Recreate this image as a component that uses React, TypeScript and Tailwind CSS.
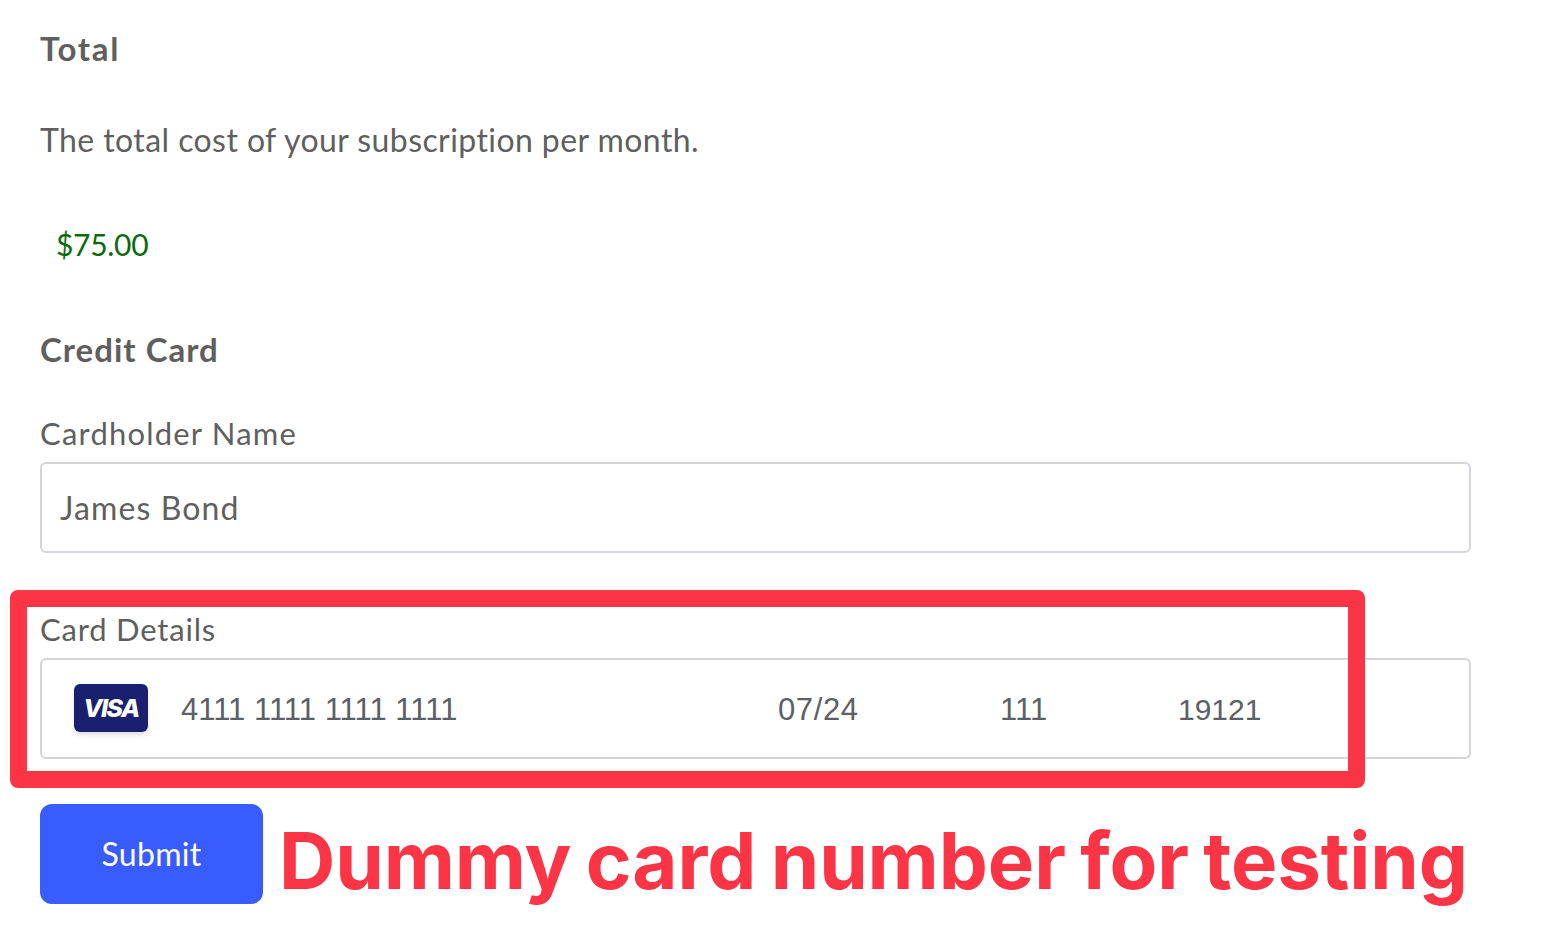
export default function App() {
  return (
    <main className="relative h-[941px] w-[1550px] overflow-hidden bg-white pl-10 text-[#5f5f5f] font-['Lato',sans-serif]">
      <h2 className="pt-[28px] text-[33px] leading-10 font-bold tracking-[1.7px]">Total</h2>
      <p className="mt-[52px] text-[32px] leading-10 tracking-[0.42px]">The total cost of your subscription per month.</p>
      <p className="mt-[64px] pl-4 text-[30px] leading-10 tracking-[-0.3px] text-[#0b6b0b]">$75.00</p>
      <h2 className="mt-[65px] text-[33px] leading-10 font-bold tracking-[1px]">Credit Card</h2>

      <label className="mt-[44px] block text-[31px] leading-10 tracking-[1.2px]">Cardholder Name</label>
      <div className="mt-[9px] flex h-[91px] w-[1431px] items-center rounded-md border-2 border-[#d3d5db] px-[18px] text-[32px] tracking-[1.1px]">
        James Bond
      </div>

      <label className="mt-[56px] block text-[31px] leading-10 tracking-[0.8px]">Card Details</label>
      <div className="mt-[9px] flex h-[101px] w-[1431px] items-center rounded-md border-2 border-[#d3d5db] pl-8 text-[31px] text-[#5c5f66] font-['Liberation_Sans',sans-serif]">
        <div className="mb-[2px] flex h-[48px] w-[74px] items-center justify-center rounded-md bg-[#18206f] pt-[2px] shadow-md">
          <span className="text-[25px] leading-none font-extrabold italic tracking-[-1.5px] text-white font-['Inter',sans-serif]">VISA</span>
        </div>
        <span className="ml-[33px] mt-[4px] w-[597px]">4111 1111 1111 1111</span>
        <span className="mt-[4px] w-[222px] tracking-[0.6px]">07/24</span>
        <span className="mt-[4px] w-[178px]">111</span>
        <span className="mt-[1px] text-[30px]">19121</span>
      </div>

      <div className="mt-[45px] flex items-center">
        <button className="h-[100px] w-[223px] rounded-xl bg-[#385cff] text-[32px] tracking-[0.3px] text-white">Submit</button>
        <span className="ml-[16px] mt-[14px] text-[78px] leading-none font-bold tracking-[-0.1px] [word-spacing:-4px] text-[#fb3446] font-['Inter',sans-serif]">
          Dummy card number for testing
        </span>
      </div>

      <div className="absolute left-[10px] top-[590px] h-[198px] w-[1355px] rounded-lg border-[17px] border-[#fb3446]" />
    </main>
  );
}
